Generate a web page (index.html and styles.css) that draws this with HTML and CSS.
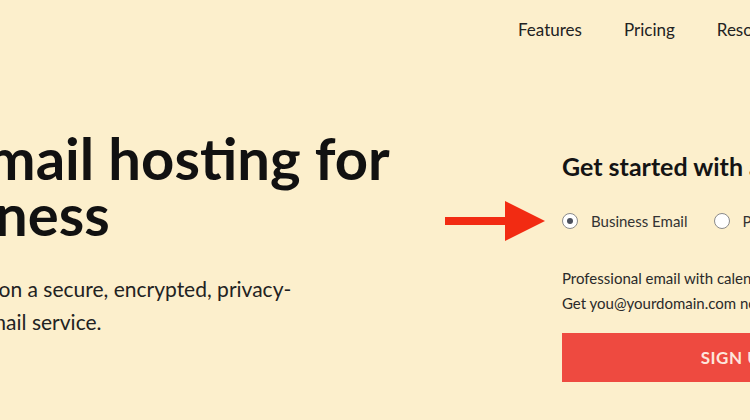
FILE: index.html
```html
<!DOCTYPE html>
<html lang="en">
<head>
    <meta charset="UTF-8">
    <title>Business email hosting</title>
    <link rel="stylesheet" href="styles.css">
</head>
<body>
<div class="page">
    <div class="header">
        <div class="logo">mailbox</div>
        <ul class="nav">
            <li><a href="javascript:;">Features</a></li>
            <li><a href="javascript:;">Pricing</a></li>
            <li><a href="javascript:;">Resources</a></li>
            <li><a href="javascript:;">Log in</a></li>
        </ul>
    </div>

    <div class="hero">
        <div class="intro">
            <h1>Private email hosting for<br>your business</h1>
            <p>Build your business email on a secure, encrypted, privacy-<br>focused and spam-free email service.</p>
        </div>

        <div class="signup">
            <h2>Get started with a free trial</h2>
            <div class="options">
                <!-- red arrow pointing at the first option -->
                <svg class="arrow" width="100" height="40" viewBox="0 0 100 40">
                    <rect x="0" y="16" width="62" height="8" fill="#f22b12"/>
                    <polygon points="60,0 100,20 60,40" fill="#f22b12"/>
                </svg>
                <label class="option"><span class="radio checked"></span>Business Email</label>
                <label class="option"><span class="radio"></span>Personal Email</label>
            </div>
            <p class="desc">Professional email with calendar and contacts.<br>Get you@yourdomain.com now.</p>
            <a class="btn" href="javascript:;">SIGN UP</a>
        </div>
    </div>
</div>
</body>
</html>
```

FILE: styles.css
```css
*{
    margin: 0px;
    padding: 0px;
}
body{
    background-color: #fcefcc;
    font-family: Lato, "Open Sans", sans-serif;
    color: #1a1a1a;
    overflow: hidden;
}
.page{
    width: 1280px;
    margin-left: -265px;
}
.header{
    height: 58px;
    display: flex;
    align-items: center;
    padding: 0 45px;
}
.logo{
    width: 200px;
    font-size: 24px;
    font-weight: bold;
}
.nav{
    display: flex;
    gap: 42px;
    margin-left: 538px;
    list-style: none;
}
.nav a{
    font-size: 17px;
    color: #222;
    text-decoration: none;
}
.hero{
    display: flex;
    justify-content: space-between;
    align-items: flex-start;
    padding: 72px 105px 0 27px;
}
.intro{
    width: 660px;
}
.intro h1{
    margin-left: -3px;
    font-size: 58px;
    line-height: 56px;
    font-weight: bold;
    color: #111;
    white-space: nowrap;
}
.intro p{
    margin-top: 30px;
    font-size: 21px;
    line-height: 33px;
    color: #222;
    white-space: nowrap;
}
.signup{
    width: 348px;
    margin-top: 21px;
}
.signup h2{
    font-size: 25px;
    line-height: 30px;
    font-weight: bold;
    color: #141414;
    white-space: nowrap;
}
.options{
    position: relative;
    display: flex;
    gap: 26px;
    margin-top: 28px;
    height: 24px;
    white-space: nowrap;
}
.arrow{
    position: absolute;
    left: -117px;
    top: -8px;
}
.option{
    display: flex;
    align-items: center;
    gap: 13px;
    font-size: 15px;
    color: #333;
}
.radio{
    width: 14px;
    height: 14px;
    border: 1px solid #8a8a8a;
    border-radius: 50%;
    background-color: #fff;
    display: flex;
    align-items: center;
    justify-content: center;
}
.radio.checked::after{
    content: "";
    width: 6px;
    height: 6px;
    border-radius: 50%;
    background-color: #4b505c;
}
.desc{
    margin-top: 33px;
    font-size: 15px;
    line-height: 25px;
    color: #2a2a2a;
    white-space: nowrap;
}
.btn{
    display: block;
    margin-top: 17px;
    height: 49px;
    line-height: 49px;
    background-color: #ee4a40;
    color: #fde6dc;
    text-align: center;
    font-size: 17px;
    font-weight: bold;
    letter-spacing: 0.5px;
    text-decoration: none;
}
```
